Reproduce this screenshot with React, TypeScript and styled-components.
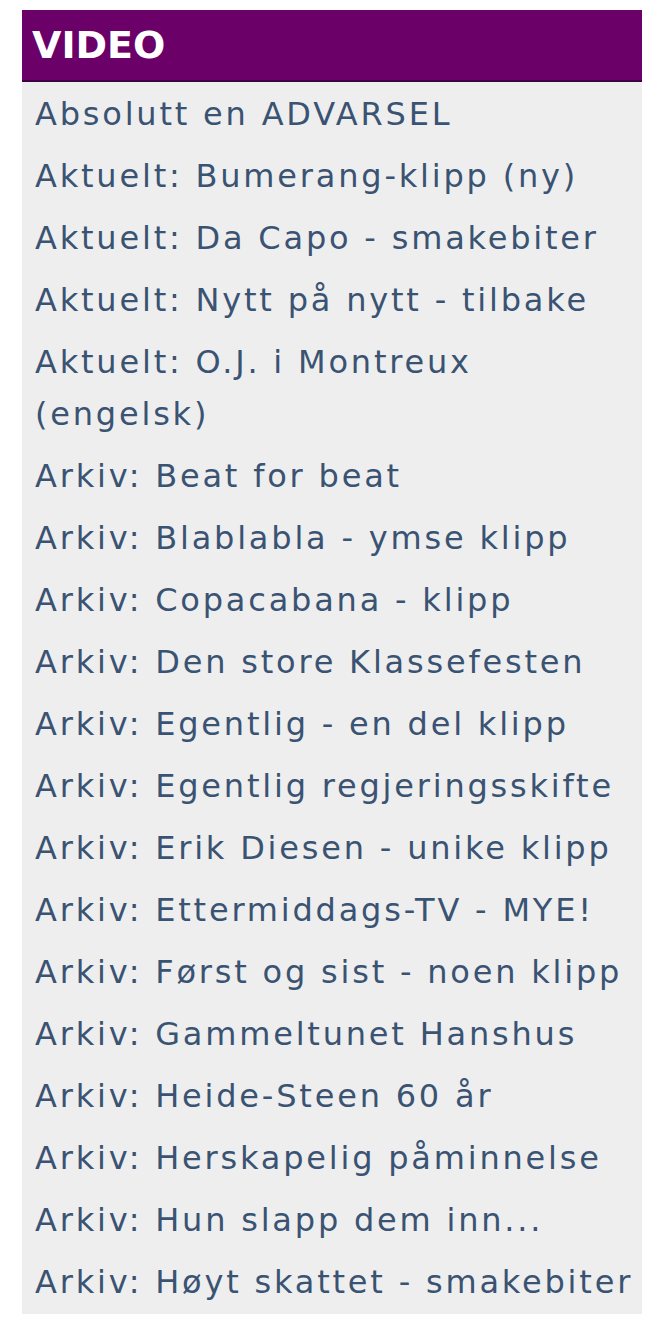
import styled, { createGlobalStyle } from "styled-components";

const items = [
  "Absolutt en ADVARSEL",
  "Aktuelt: Bumerang-klipp (ny)",
  "Aktuelt: Da Capo - smakebiter",
  "Aktuelt: Nytt på nytt - tilbake",
  "Aktuelt: O.J. i Montreux (engelsk)",
  "Arkiv: Beat for beat",
  "Arkiv: Blablabla - ymse klipp",
  "Arkiv: Copacabana - klipp",
  "Arkiv: Den store Klassefesten",
  "Arkiv: Egentlig - en del klipp",
  "Arkiv: Egentlig regjeringsskifte",
  "Arkiv: Erik Diesen - unike klipp",
  "Arkiv: Ettermiddags-TV - MYE!",
  "Arkiv: Først og sist - noen klipp",
  "Arkiv: Gammeltunet Hanshus",
  "Arkiv: Heide-Steen 60 år",
  "Arkiv: Herskapelig påminnelse",
  "Arkiv: Hun slapp dem inn...",
  "Arkiv: Høyt skattet - smakebiter",
];

const App = () => {
  return (
    <>
      <GlobalStyle />
      <Page>
        <Panel>
          <Header>VIDEO</Header>
          <List>
            {items.map((t) => (
              <Item key={t}>
                <Link href="#">{t}</Link>
              </Item>
            ))}
          </List>
        </Panel>
      </Page>
    </>
  );
};

export default App;

const GlobalStyle = createGlobalStyle`
  body {
    margin: 0;
    background: #ffffff;
  }
`;

const Page = styled.div`
  padding: 10px 22px 22px 22px;
`;

const Panel = styled.div`
  width: 620px;
  background-color: #eeeeef;
`;

const Header = styled.div`
  background-color: #6a0068;
  border-bottom: 2px solid #3e0040;
  height: 70px;
  padding-left: 10px;
  display: flex;
  align-items: center;
  font-family: "DejaVu Sans", Verdana, sans-serif;
  font-weight: bold;
  font-size: 38px;
  color: #ffffff;
`;

const List = styled.ul`
  list-style: none;
  margin: 0;
  padding: 6px 4px 6px 13px;
  display: flex;
  flex-direction: column;
  gap: 10px;
`;

const Item = styled.li`
  font-family: "DejaVu Sans", Verdana, sans-serif;
  font-size: 32px;
  letter-spacing: 2.8px;
  line-height: 52px;
`;

const Link = styled.a`
  color: #3a5372;
  text-decoration: none;
`;
